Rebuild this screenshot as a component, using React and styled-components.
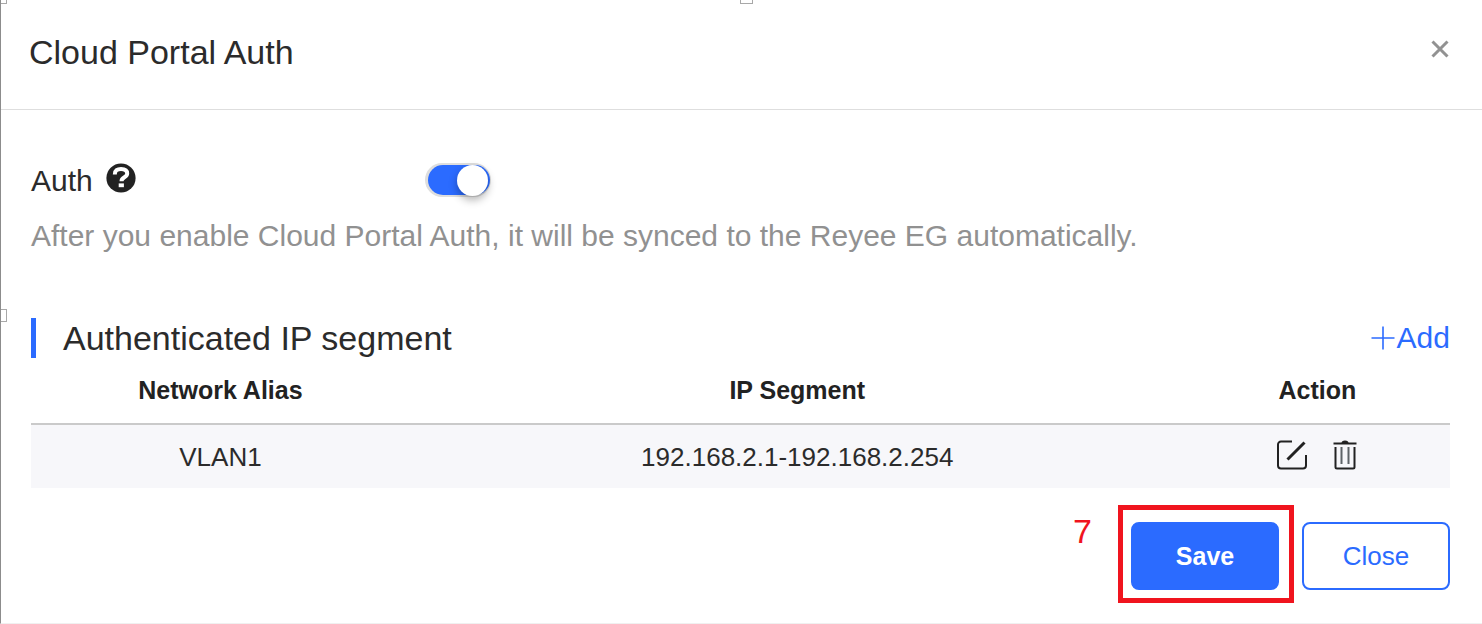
import React, { useState } from 'react'
import styled, { createGlobalStyle } from 'styled-components'

const segments = [{ id: 1, alias: 'VLAN1', range: '192.168.2.1-192.168.2.254' }]

const CloseIcon = () => (
  <svg width="18" height="18" viewBox="0 0 18 18" fill="none" stroke="#929292" strokeWidth="3">
    <path d="M1.5 1.5L16.5 16.5M16.5 1.5L1.5 16.5" />
  </svg>
)

const HelpIcon = () => (
  <svg width="30" height="30" viewBox="0 0 30 30" fill="none">
    <circle cx="15" cy="15" r="14.6" fill="#222" />
    <path d="M8.8 11.4C8.8 7.4 11.400 6 15 6c3.800 0 6.200 1.600 6.200 4.600 0 4-5.700 3.400-5.700 7.600" stroke="#fff" strokeWidth="4" />
    <path d="M12.700 20.400h5.200v3.800h-5.200z" fill="#fff" />
  </svg>
)

const PlusIcon = () => (
  <svg width="24" height="24" viewBox="0 0 24 24" stroke="#2b6bff" strokeWidth="1.6">
    <path d="M0.500 12H23.500M12 0.500V23.500" />
  </svg>
)

const EditIcon = () => (
  <svg width="30" height="30" viewBox="0 0 30 30" fill="none" stroke="#222" strokeWidth="2">
    <path d="M15 1.500H4a3 3 0 0 0-3 3V25.500a3 3 0 0 0 3 3H26a3 3 0 0 0 3-3V15" />
    <path d="M10.500 19.500L27.500 2.500" strokeWidth="3" />
  </svg>
)

const TrashIcon = () => (
  <svg width="24" height="30" viewBox="0 0 24 30" fill="none" stroke="#222" strokeWidth="2">
    <path d="M0.500 3.500H23.500" />
    <path d="M8.500 3a3.500 2.500 0 0 1 7 0z" fill="#222" stroke="none" />
    <path d="M2.500 7V27a1.500 1.500 0 0 0 1.500 1.500H20a1.500 1.500 0 0 0 1.500-1.500V7" />
    <path d="M8.500 7V24M15.500 7V24" stroke="#5f6468" />
  </svg>
)

const SegmentRow = ({ alias, range }) => (
  <tr>
    <Cell>{alias}</Cell>
    <Cell>{range}</Cell>
    <Cell>
      <Actions>
        <IconButton aria-label="Edit"><EditIcon /></IconButton>
        <IconButton aria-label="Delete"><TrashIcon /></IconButton>
      </Actions>
    </Cell>
  </tr>
)

export default function App() {
  const [auth, setAuth] = useState(true)

  return (
    <Dialog role="dialog" aria-labelledby="dialog-title">
      <GlobalStyle />
      <Handle $top="-9px" $left="-7px" />
      <Handle $top="-9px" $left="50%" />
      <Handle $top="50%" $left="-7px" />
      <Header>
        <Title id="dialog-title">Cloud Portal Auth</Title>
        <IconButton aria-label="Close dialog"><CloseIcon /></IconButton>
      </Header>
      <Body>
        <AuthRow>
          <AuthLabel htmlFor="auth">
            Auth
            <HelpIcon />
          </AuthLabel>
          <Switch id="auth" type="checkbox" checked={auth} onChange={() => setAuth(!auth)} />
        </AuthRow>
        <Hint>After you enable Cloud Portal Auth, it will be synced to the Reyee EG automatically.</Hint>
        <SectionHeader>
          <SectionTitle>Authenticated IP segment</SectionTitle>
          <AddButton>
            <PlusIcon />
            Add
          </AddButton>
        </SectionHeader>
        <Table>
          <thead>
            <tr>
              <HeadCell $width="26.7%">Network Alias</HeadCell>
              <HeadCell>IP Segment</HeadCell>
              <HeadCell $width="18.7%">Action</HeadCell>
            </tr>
          </thead>
          <tbody>
            {segments.map((s) => <SegmentRow key={s.id} {...s} />)}
          </tbody>
        </Table>
        <Footer>
          <Marked>
            <Step>7</Step>
            <Button $primary>Save</Button>
          </Marked>
          <Button>Close</Button>
        </Footer>
      </Body>
    </Dialog>
  )
}

const GlobalStyle = createGlobalStyle`
  * {
    box-sizing: border-box;
  }
  body {
    margin: 0;
    background: #fff;
    color: #2b2b2b;
    font-family: "Liberation Sans", Arial, sans-serif;
  }
  button {
    font-family: inherit;
    cursor: pointer;
  }
`

const Dialog = styled.div`
  position: relative;
  min-height: 100vh;
  overflow: hidden;
  border-left: 1px solid #8c8c8c;
  border-bottom: 1px solid #f0f0f0;
`

const Handle = styled.span`
  position: absolute;
  top: ${({ $top }) => $top};
  left: ${({ $left }) => $left};
  width: 13px;
  height: 13px;
  margin-top: ${({ $top }) => ($top === '50%' ? '-3px' : '0')};
  margin-left: ${({ $left }) => ($left === '50%' ? '-2px' : '0')};
  border: 1px solid #a8a8a8;
  background: #fff;
`

const Header = styled.header`
  display: flex;
  align-items: flex-start;
  justify-content: space-between;
  padding: 32px 33px 37px 28px;
  border-bottom: 1px solid #dedede;
`

const Title = styled.h1`
  margin: 0;
  font-size: 34px;
  font-weight: 400;
  line-height: 40px;
`

const IconButton = styled.button`
  display: flex;
  padding: 0;
  border: 0;
  background: none;

  ${Header} & {
    margin-top: 8px;
  }
`

const Body = styled.main`
  padding: 53px 32px 32px 30px;
`

const AuthRow = styled.div`
  display: flex;
  align-items: flex-start;
`

const AuthLabel = styled.label`
  display: flex;
  gap: 13px;
  width: 394px;
  font-size: 30px;
  line-height: 36px;
`

const Switch = styled.input`
  appearance: none;
  position: relative;
  width: 66px;
  height: 34px;
  margin: 0;
  padding: 2px 1px 2px 3px;
  border-radius: 17px;
  background: #dedede;
  cursor: pointer;

  &::before {
    content: '';
    display: block;
    height: 30px;
    border-radius: 15px;
    background: ${({ checked }) => (checked ? '#2b6bff' : '#dedede')};
  }

  &::after {
    content: '';
    position: absolute;
    top: 2px;
    left: ${({ checked }) => (checked ? '32px' : '1px')};
    width: 31px;
    height: 31px;
    border-radius: 50%;
    background: #fff;
    box-shadow: 0 4px 8px rgba(0, 0, 0, 0.3);
  }
`

const Hint = styled.p`
  margin: 19px 0 64px;
  color: #919191;
  font-size: 30px;
  line-height: 36px;
`

const SectionHeader = styled.div`
  display: flex;
  align-items: center;
  justify-content: space-between;
`

const SectionTitle = styled.h2`
  margin: 0;
  padding-left: 27px;
  border-left: 5px solid #2b6bff;
  font-size: 34px;
  font-weight: 400;
  line-height: 40px;
`

const AddButton = styled.button`
  display: flex;
  align-items: center;
  gap: 2px;
  padding: 0;
  border: 0;
  background: none;
  color: #2b6bff;
  font-size: 30px;
  line-height: 36px;
`

const Table = styled.table`
  width: 100%;
  table-layout: fixed;
  border-spacing: 0;
  font-size: 26px;
  line-height: 32px;
`

const HeadCell = styled.th`
  width: ${({ $width }) => $width || 'auto'};
  padding: 16px 0 17px;
  border-bottom: 2px solid #cacaca;
  color: #222;
  font-size: 25px;
`

const Cell = styled.td`
  padding: 16px 0 15px;
  background: #f7f7fa;
  text-align: center;
  vertical-align: top;
`

const Actions = styled.div`
  display: flex;
  justify-content: center;
  gap: 26px;
  margin-top: -1px;
`

const Footer = styled.footer`
  display: flex;
  justify-content: flex-end;
  gap: 23px;
  margin-top: 34px;
`

const Button = styled.button`
  width: 148px;
  height: 68px;
  border: 2px solid #2b6bff;
  border-radius: 8px;
  background: ${({ $primary }) => ($primary ? '#2b6bff' : '#fff')};
  color: ${({ $primary }) => ($primary ? '#fff' : '#2b6bff')};
  font-size: ${({ $primary }) => ($primary ? '25px' : '26px')};
  font-weight: ${({ $primary }) => ($primary ? 700 : 400)};
`

// red frame drawn round the button
const Marked = styled.div`
  position: relative;

  &::after {
    content: '';
    position: absolute;
    inset: -17px -15px -13px -13px;
    border: 5px solid #f0141e;
    pointer-events: none;
  }
`

const Step = styled.span`
  position: absolute;
  top: -11px;
  right: 187px;
  color: #f0141e;
  font-size: 34px;
  line-height: 40px;
`
